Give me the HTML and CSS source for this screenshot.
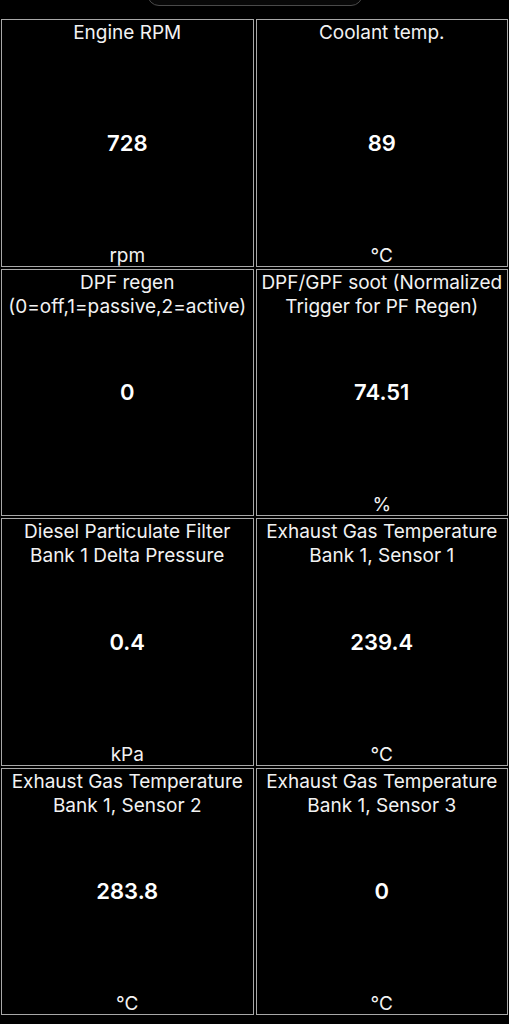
FILE: index.html
```html
<!DOCTYPE html>
<html>
<head>
<meta charset="utf-8">
<link rel="stylesheet" href="styles.css">
</head>
<body>
<div class="tabbar"></div>
<div class="grid">
  <div class="tile"><div class="title">Engine RPM</div><div class="value">728</div><div class="unit">rpm</div></div>
  <div class="tile"><div class="title">Coolant temp.</div><div class="value">89</div><div class="unit">°C</div></div>
  <div class="tile"><div class="title">DPF regen<br>(0=off,1=passive,2=active)</div><div class="value">0</div><div class="unit"></div></div>
  <div class="tile"><div class="title">DPF/GPF soot (Normalized<br>Trigger for PF Regen)</div><div class="value">74.51</div><div class="unit">%</div></div>
  <div class="tile"><div class="title">Diesel Particulate Filter<br>Bank 1 Delta Pressure</div><div class="value">0.4</div><div class="unit">kPa</div></div>
  <div class="tile"><div class="title">Exhaust Gas Temperature<br>Bank 1, Sensor 1</div><div class="value">239.4</div><div class="unit">°C</div></div>
  <div class="tile"><div class="title">Exhaust Gas Temperature<br>Bank 1, Sensor 2</div><div class="value">283.8</div><div class="unit">°C</div></div>
  <div class="tile"><div class="title">Exhaust Gas Temperature<br>Bank 1, Sensor 3</div><div class="value">0</div><div class="unit">°C</div></div>
</div>
</body>
</html>
```
FILE: styles.css
```css
html, body {
  margin: 0;
  padding: 0;
  background: #000;
  height: 1024px;
  overflow: hidden;
}
body {
  font-family: Inter, "Liberation Sans", sans-serif;
  color: #fff;
}
.tabbar {
  width: 216px;
  height: 30px;
  margin: -24px auto 0;
  border: 1px solid #4a4a4a;
  border-radius: 12px;
  box-sizing: border-box;
  background: #080808;
}
.grid {
  margin-top: 13px;
  padding: 0 1px;
  height: 996px;
  display: grid;
  grid-template-columns: 1fr 1fr;
  grid-template-rows: repeat(4, 1fr);
  gap: 2px;
}
.tile {
  border: 1.5px solid #a8a8a8;
  display: grid;
  grid-template-rows: 1fr auto 1fr;
  text-align: center;
  min-height: 0;
}
.title {
  align-self: start;
  font-size: 19px;
  line-height: 24px;
  padding-top: 1px;
  color: #f2f2f2;
  white-space: nowrap;
}
.value {
  font-size: 22px;
  font-weight: 600;
  line-height: 26px;
}
.unit {
  align-self: end;
  font-size: 19px;
  line-height: 20px;
  color: #f2f2f2;
}
```
